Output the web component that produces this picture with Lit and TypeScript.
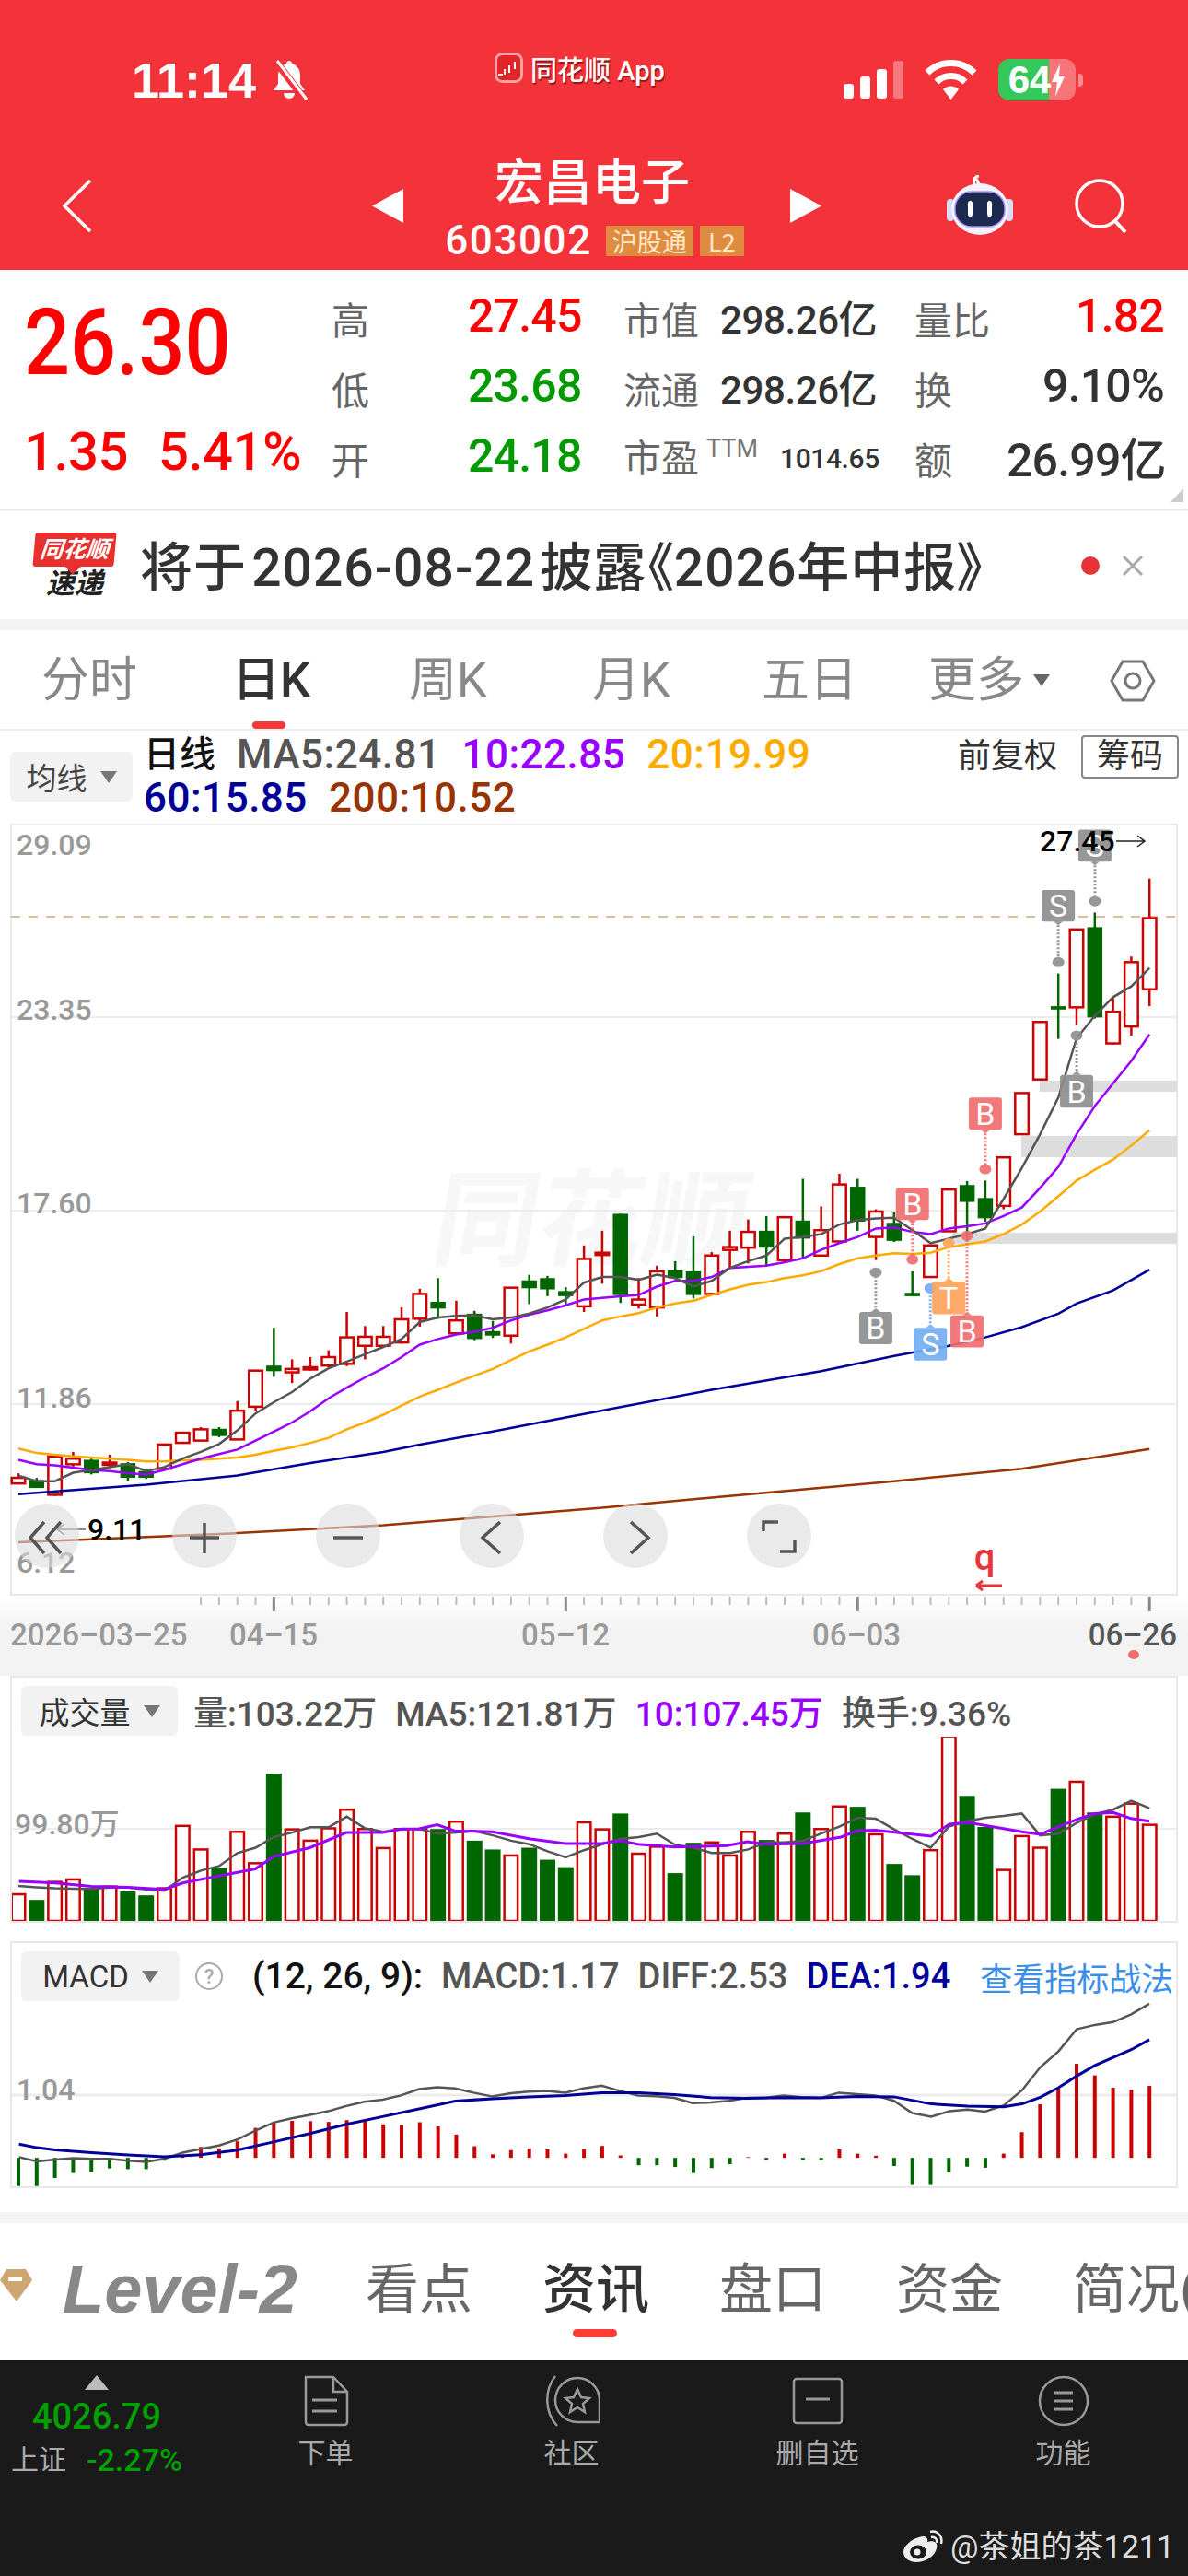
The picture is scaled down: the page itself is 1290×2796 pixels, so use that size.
import { LitElement, html, svg, css } from 'lit';
import { customElement } from 'lit/decorators.js';

// measured from the chart, converted to page pixels by the helpers below
const chartY = (v: number) => 880 + v / 1.633;
const subX = (v: number) => v / 1.2155;
const subY = (v: number) => 1820 + v / 2.613;
const candleX = (i: number) => 20 + 19.81 * i;
const markX = (v: number) => 640 + v / 2.412;

const RED = '#cc0000';
const GREEN = '#006600';

// bodyTop, bodyBottom, wickTop, wickBottom, colour
type Candle = [number, number, number, number, 'r' | 'g'];
const candles: Candle[] = [
  [1184, 1194, 1176, 1194, 'r'], [1188, 1202, 1184, 1202, 'g'], [1146, 1214, 1146, 1216, 'r'], [1150, 1160, 1138, 1164, 'r'],
  [1152, 1176, 1150, 1178, 'g'], [1157, 1161, 1143, 1166, 'r'], [1158, 1184, 1156, 1190, 'g'], [1172, 1184, 1168, 1186, 'g'],
  [1125, 1168, 1125, 1170, 'r'], [1104, 1122, 1104, 1122, 'r'], [1098, 1118, 1094, 1118, 'r'], [1097, 1110, 1094, 1112, 'g'],
  [1065, 1116, 1048, 1116, 'r'], [994, 1058, 994, 1066, 'r'], [985, 995, 918, 1005, 'g'], [991, 997, 974, 1016, 'r'],
  [988, 992, 970, 994, 'r'], [970, 985, 958, 988, 'r'], [935, 982, 890, 986, 'r'], [934, 950, 915, 974, 'r'],
  [934, 950, 915, 952, 'r'], [903, 944, 882, 946, 'r'], [858, 902, 849, 916, 'r'], [872, 884, 830, 902, 'g'],
  [905, 928, 870, 930, 'r'], [893, 938, 888, 940, 'g'], [924, 932, 906, 936, 'g'], [847, 932, 847, 946, 'r'],
  [834, 848, 824, 876, 'g'], [830, 850, 826, 862, 'g'], [853, 862, 846, 880, 'g'], [796, 880, 772, 890, 'r'],
  [785, 789, 746, 840, 'r'], [716, 860, 716, 874, 'g'], [868, 877, 830, 884, 'r'], [818, 882, 808, 898, 'r'],
  [816, 830, 800, 832, 'g'], [818, 860, 756, 866, 'g'], [790, 858, 784, 860, 'r'], [775, 780, 746, 810, 'r'],
  [748, 776, 726, 804, 'r'], [746, 776, 720, 808, 'g'], [722, 798, 722, 800, 'r'], [728, 760, 654, 795, 'g'],
  [745, 790, 703, 792, 'r'], [664, 765, 645, 768, 'r'], [668, 730, 654, 746, 'g'], [712, 757, 708, 798, 'r'],
  [732, 764, 712, 766, 'g'], [856, 862, 818, 862, 'g'], [772, 828, 772, 828, 'r'], [673, 747, 673, 748, 'r'],
  [665, 695, 658, 765, 'g'], [688, 724, 657, 730, 'g'], [616, 702, 616, 708, 'r'], [502, 575, 502, 575, 'r'],
  [376, 478, 376, 478, 'r'], [348, 354, 290, 406, 'g'], [212, 350, 212, 382, 'r'], [208, 368, 182, 370, 'g'],
  [358, 414, 332, 416, 'r'], [270, 384, 260, 400, 'r'], [192, 318, 122, 348, 'r'],
];

const ma5 = [1180, 1190, 1190, 1175, 1170, 1165, 1160, 1172, 1165, 1150, 1138, 1124, 1100, 1070, 1050, 1032, 1008, 990, 978, 965, 952, 938, 908, 900, 897, 896, 903, 900, 893, 882, 868, 838, 828, 828, 833, 824, 830, 845, 835, 812, 800, 790, 760, 757, 752, 735, 727, 724, 723, 745, 768, 760, 752, 742, 690, 635, 575, 510, 405, 365, 332, 313, 280];
const ma10 = [1152, 1160, 1162, 1166, 1170, 1172, 1176, 1178, 1170, 1160, 1150, 1142, 1134, 1118, 1102, 1086, 1066, 1043, 1024, 1006, 990, 970, 948, 938, 930, 925, 918, 905, 895, 887, 878, 868, 865, 862, 860, 845, 835, 835, 828, 812, 810, 808, 802, 795, 780, 768, 757, 742, 740, 748, 752, 742, 738, 733, 720, 705, 670, 633, 575, 525, 485, 445, 398];
const ma20 = [1132, 1140, 1143, 1146, 1148, 1150, 1152, 1155, 1155, 1153, 1152, 1150, 1148, 1143, 1136, 1130, 1122, 1113, 1098, 1086, 1072, 1056, 1040, 1028, 1015, 1003, 991, 975, 960, 948, 935, 920, 905, 898, 892, 882, 875, 870, 860, 850, 842, 837, 830, 825, 818, 805, 795, 790, 786, 787, 785, 775, 770, 765, 752, 735, 712, 685, 657, 638, 620, 595, 568];
const ma60: [number, number][] = [[0, 1213], [7, 1196], [12, 1180], [16, 1158], [20, 1138], [22, 1125], [26, 1102], [30, 1077], [38, 1028], [44, 995], [48, 968], [51, 950], [53, 935], [55, 917], [57, 893], [58, 875], [60, 852], [62, 815]];
const ma200: [number, number][] = [[0, 1298], [4, 1293], [12, 1282], [20, 1268], [32, 1237], [38, 1219], [48, 1190], [55, 1168], [62, 1133]];

// X in the chart crop, label, colour, box top, box bottom, dot
const markers: [number, string, string, number, number, number][] = [
  [750, 'B', '#8f8f8f', 890, 947, 820],
  [846, 'B', '#f06e6e', 670, 727, 797],
  [893, 'S', '#74aef2', 918, 976, 848],
  [941, 'T', '#ffa35c', 836, 894, 768],
  [989, 'B', '#f06e6e', 896, 953, 755],
  [1037, 'B', '#f06e6e', 510, 567, 637],
  [1228, 'S', '#8f8f8f', 142, 198, 270],
  [1324, 'S', '#8f8f8f', 35, 92, 162],
  [1276, 'B', '#8f8f8f', 470, 528, 400],
];

const volBars: [number, 'r' | 'g'][] = [
  [622, 'r'], [638, 'g'], [587, 'r'], [580, 'r'], [605, 'g'], [600, 'r'], [614, 'g'], [625, 'g'], [605, 'r'], [428, 'r'],
  [495, 'r'], [548, 'g'], [445, 'r'], [534, 'r'], [280, 'g'], [438, 'r'], [470, 'r'], [435, 'r'], [382, 'r'], [437, 'r'],
  [491, 'r'], [437, 'r'], [437, 'r'], [437, 'g'], [416, 'r'], [470, 'g'], [495, 'g'], [512, 'r'], [490, 'g'], [524, 'g'],
  [545, 'g'], [418, 'r'], [438, 'r'], [393, 'g'], [507, 'r'], [487, 'r'], [562, 'g'], [476, 'g'], [475, 'r'], [512, 'r'],
  [445, 'r'], [468, 'g'], [450, 'r'], [390, 'g'], [437, 'r'], [373, 'r'], [374, 'g'], [452, 'r'], [536, 'g'], [568, 'g'],
  [497, 'r'], [174, 'r'], [343, 'g'], [431, 'g'], [553, 'r'], [457, 'r'], [490, 'r'], [323, 'g'], [303, 'r'], [390, 'g'],
  [402, 'r'], [365, 'r'], [425, 'r'],
];
const volMa5 = [598, 602, 605, 606, 607, 603, 603, 608, 612, 575, 555, 542, 505, 490, 460, 447, 432, 432, 402, 435, 445, 437, 437, 450, 447, 443, 455, 470, 480, 500, 517, 497, 480, 465, 460, 450, 482, 490, 505, 505, 495, 475, 475, 470, 450, 430, 405, 408, 438, 465, 490, 430, 415, 405, 400, 393, 455, 450, 420, 395, 382, 357, 378];
const volMa10: [number, number][] = [[25, 585], [73, 590], [121, 600], [169, 602], [217, 608], [241, 590], [289, 570], [337, 550], [361, 515], [409, 490], [457, 447], [505, 447], [530, 437], [553, 436], [577, 425], [600, 442], [650, 445], [700, 465], [746, 478], [794, 478], [818, 470], [842, 480], [890, 488], [960, 484], [986, 473], [1010, 480], [1060, 478], [1110, 460], [1131, 442], [1155, 440], [1229, 457], [1253, 423], [1277, 418], [1349, 445], [1373, 452], [1421, 410], [1445, 393], [1469, 390], [1493, 407], [1517, 415]];

const macdBars: [number, 'r' | 'g'][] = [
  [1447, 'g'], [1447, 'g'], [1424, 'g'], [1410, 'g'], [1407, 'g'], [1397, 'g'], [1399, 'g'], [1399, 'g'], [1375, 'g'], [1358, 'r'],
  [1336, 'r'], [1340, 'r'], [1320, 'r'], [1282, 'r'], [1268, 'r'], [1262, 'r'], [1263, 'r'], [1265, 'r'], [1260, 'r'], [1258, 'r'],
  [1272, 'r'], [1274, 'r'], [1266, 'r'], [1278, 'r'], [1301, 'r'], [1334, 'r'], [1357, 'r'], [1345, 'r'], [1341, 'r'], [1343, 'r'],
  [1355, 'r'], [1342, 'r'], [1333, 'r'], [1360, 'r'], [1388, 'g'], [1388, 'g'], [1393, 'g'], [1410, 'g'], [1396, 'g'], [1385, 'g'],
  [1365, 'r'], [1372, 'g'], [1355, 'r'], [1372, 'g'], [1373, 'g'], [1343, 'r'], [1355, 'r'], [1361, 'r'], [1390, 'g'], [1444, 'g'],
  [1444, 'g'], [1408, 'g'], [1392, 'g'], [1395, 'g'], [1355, 'r'], [1294, 'r'], [1215, 'r'], [1170, 'r'], [1100, 'r'], [1133, 'r'],
  [1168, 'r'], [1174, 'r'], [1163, 'r'],
];
const diff: [number, number][] = [[25, 1365], [49, 1377], [73, 1372], [97, 1368], [121, 1370], [145, 1370], [169, 1375], [193, 1378], [217, 1370], [241, 1352], [265, 1342], [289, 1332], [313, 1315], [337, 1290], [361, 1267], [385, 1255], [409, 1245], [433, 1235], [457, 1220], [481, 1208], [505, 1202], [529, 1190], [553, 1172], [577, 1167], [601, 1170], [625, 1182], [650, 1193], [674, 1184], [698, 1179], [722, 1177], [746, 1182], [770, 1170], [794, 1162], [818, 1177], [842, 1190], [866, 1192], [890, 1197], [914, 1212], [938, 1210], [962, 1205], [986, 1197], [1010, 1197], [1034, 1190], [1058, 1195], [1083, 1197], [1107, 1182], [1131, 1186], [1155, 1190], [1180, 1205], [1204, 1240], [1229, 1250], [1253, 1235], [1277, 1230], [1300, 1236], [1325, 1218], [1349, 1175], [1373, 1110], [1397, 1065], [1421, 1002], [1445, 990], [1469, 982], [1493, 960], [1517, 930]];
const dea: [number, number][] = [[25, 1328], [49, 1338], [73, 1344], [121, 1352], [169, 1359], [217, 1364], [265, 1358], [313, 1345], [361, 1322], [409, 1298], [457, 1272], [505, 1250], [553, 1228], [601, 1206], [650, 1199], [698, 1194], [746, 1190], [794, 1182], [842, 1182], [890, 1188], [938, 1196], [986, 1198], [1034, 1196], [1083, 1197], [1131, 1193], [1180, 1194], [1229, 1214], [1277, 1220], [1325, 1222], [1349, 1214], [1373, 1195], [1397, 1168], [1421, 1135], [1445, 1105], [1493, 1060], [1517, 1032]];

const series = (vals: number[]) => vals.map((v, i) => `${candleX(i).toFixed(1)},${chartY(v).toFixed(1)}`).join(' ');
const pairs = (vals: [number, number][]) => vals.map(([i, v]) => `${candleX(i).toFixed(1)},${chartY(v).toFixed(1)}`).join(' ');
const subPoints = (vals: [number, number][]) => vals.map(([x, y]) => `${subX(x).toFixed(1)},${subY(y).toFixed(1)}`).join(' ');

@customElement('app-root')
export class AppRoot extends LitElement {
  static styles = css`
    :host {
      display: block;
      width: 1290px;
      height: 2796px;
      overflow: hidden;
      background: #fff;
      font-family: Roboto, "Noto Sans CJK SC", sans-serif;
      color: #333;
    }
    svg { display: block; flex: none; }
    svg text { font-family: Roboto, "Noto Sans CJK SC", sans-serif; }

    .head { height: 293px; background: #f3323a; color: #fff; }
    .status { height: 163px; display: flex; align-items: center; padding-top: 10px; box-sizing: border-box; }
    .clock { display: flex; align-items: center; gap: 14px; margin-left: 143px; width: 394px; }
    .time { font-family: "Liberation Sans", sans-serif; font-size: 54px; font-weight: 700; line-height: 60px; }
    .island { display: flex; align-items: center; gap: 8px; width: 379px; margin-top: -26px; font-size: 29px; font-weight: 500; text-shadow: 1px 2px 1px rgba(80, 0, 0, 0.6); }
    .sysicons { display: flex; align-items: center; }
    .battery { margin-left: 23px; width: 84px; height: 45px; border-radius: 12px; background: linear-gradient(90deg, #34c759 65%, rgba(255, 255, 255, 0.32) 65%); display: flex; align-items: center; justify-content: center; gap: 0; font-size: 42px; font-weight: 700; font-family: "Liberation Sans", sans-serif; }
    .nub { margin-left: 3px; width: 5px; height: 14px; border-radius: 0 4px 4px 0; background: rgba(255, 255, 255, 0.45); }
    .titlebar { height: 120px; display: flex; align-items: center; padding-left: 68px; }
    .stock { width: 420px; display: flex; flex-direction: column; align-items: center; }
    .name { font-size: 53px; line-height: 56px; font-weight: 500; margin-left: -10px; font-family: "Noto Sans CJK SC", sans-serif; }
    .code-row { display: flex; align-items: center; gap: 0; height: 38px; margin-top: 20px; margin-left: -5px; }
    .code { font-size: 44px; letter-spacing: 1.600px; line-height: 38px; font-weight: 500; }
    .tag { height: 33px; line-height: 33px; width: 48px; text-align: center; background: #e08c40; color: #ffe9c9; font-size: 27px; margin-left: 7px; font-family: "Noto Sans CJK SC", sans-serif; }
    .tag.first { margin-left: 15px; width: 95px; }
    .robot { margin-left: 136px; }
    .search { margin-left: 67px; }

    .quote { position: relative; height: 259px; display: flex; border-bottom: 3px solid #eee; box-sizing: content-box; }
    .price-col { width: 360px; padding-left: 26px; box-sizing: border-box; color: #f00; }
    .big { font-size: 100px; line-height: 158px; font-weight: 500; transform: scaleX(0.88); transform-origin: left center; }
    .change { font-size: 58px; line-height: 78px; display: flex; gap: 33px; white-space: nowrap; letter-spacing: -0.500px; font-weight: 500; }
    .table { display: grid; grid-template-columns: 148px 169px 105px 211px 100px 171px; grid-auto-rows: 76px; padding-top: 12px; align-items: center; }
    .lb { font-size: 41px; color: #666; white-space: nowrap; line-height: 76px; padding-top: 6px; box-sizing: border-box; height: 76px; }
    .val { font-size: 50px; font-weight: 500; letter-spacing: -0.800px; }
    .up { color: #f00; }
    .down { color: #009900; }
    .amt { font-size: 42px; font-weight: 500; letter-spacing: -0.400px; color: #333; white-space: nowrap; }
    .amt.sm { font-size: 30px; padding-left: 65px; padding-top: 4px; }
    .right { text-align: right; white-space: nowrap; color: #333; }
    .right.up { color: #f00; }
    .ttm { display: flex; align-items: center; width: 160px; }
    .ttm small { font-size: 27px; color: #777; margin: -22px 0 0 8px; }
    .corner { position: absolute; right: 5px; bottom: 7px; }

    .notice { height: 117px; display: flex; align-items: center; padding-left: 37px; }
    .logo { width: 88px; text-align: center; }
    .logo-top { position: relative; height: 37px; line-height: 37px; background: #e8302f; color: #fff; font-size: 25px; font-weight: 700; font-style: italic; border-radius: 3px; transform: skewX(-5deg); white-space: nowrap; }
    .logo-top::after { content: ""; position: absolute; left: 38px; bottom: -6px; width: 12px; height: 12px; background: #e8302f; transform: rotate(45deg); }
    .logo-bot { margin-top: 3px; font-size: 31px; line-height: 32px; font-weight: 700; font-style: italic; color: #222; }
    .notice-text { margin: -6px 0 0 27px; width: 1000px; font-size: 57px; font-weight: 500; letter-spacing: 1px; word-spacing: -10px; color: #333; white-space: nowrap; }
    .notice-text span { font-feature-settings: "palt"; }
    .dot { margin-left: 22px; width: 20px; height: 20px; border-radius: 50%; background: #e83438; }
    .close { margin-left: 24px; }
    .band { height: 12px; background: #f4f4f4; }

    .tabs { height: 109px; box-sizing: border-box; display: grid; grid-template-columns: 207px 192px 199px 184px 181px 197px 50px; padding-left: 45px; align-items: center; border-bottom: 2px solid #eee; font-size: 52px; color: #888; position: relative; }
    .tab { position: relative; height: 109px; line-height: 107px; white-space: nowrap; display: flex; align-items: center; gap: 10px; }
    .tab.on { color: #333; font-weight: 500; }
    .tab.on::after { content: ""; position: absolute; left: 22px; bottom: 2px; width: 36px; height: 8px; border-radius: 4px; background: #f33b3b; }
    .tri { width: 0; height: 0; border-left: 9px solid transparent; border-right: 9px solid transparent; border-top: 13px solid #666; }

    .chart-head { height: 101px; display: flex; padding-left: 11px; box-sizing: border-box; }
    .select { background: #f2f2f2; border-radius: 6px; display: flex; align-items: center; justify-content: center; gap: 14px; font-size: 33px; color: #444; }
    .ma-select { width: 133px; height: 54px; margin-top: 23px; flex: none; }
    .ma-lines { margin-left: 12px; padding-top: 3px; width: 762px; font-size: 44px; font-weight: 500; letter-spacing: 0.500px; line-height: 47px; color: #555; white-space: nowrap; }
    .ma-line { display: flex; gap: 23px; height: 47px; }
    .ma-line b { font-weight: 500; font-size: 39px; color: #111; letter-spacing: 0; }
    .m10 { color: #9900ff; }
    .m20 { color: #ffaa00; }
    .m60 { color: #000099; }
    .m200 { color: #993300; }
    .ma-right { display: flex; align-items: flex-start; margin-left: 122px; font-size: 36px; white-space: nowrap; color: #333; }
    .adj { line-height: 56px; }
    .cyq { margin-left: 26px; margin-top: 5px; width: 106px; height: 47px; line-height: 43px; box-sizing: border-box; border: 2px solid #888; border-radius: 4px; text-align: center; }

    .panel { margin: 0 11px; width: 1268px; box-sizing: border-box; height: 268px; border: 2px solid #e8e8e8; overflow: hidden; }
    .panel + .panel { margin-top: 20px; }
    .panel-head { height: 64px; display: flex; align-items: center; padding: 8px 0 0 10px; box-sizing: border-box; font-size: 37px; font-weight: 500; white-space: nowrap; color: #555; gap: 20px; }
    .panel-head .select { width: 170px; height: 54px; flex: none; color: #333; font-size: 33px; font-weight: 400; margin-right: -3px; }
    .panel-head .black { color: #111; font-size: 39px; }
    .macd-info { display: flex; gap: 20px; font-size: 38px; align-items: center; margin-left: 12px; }
    .link { color: #3b8fe8; font-size: 35px; font-weight: 400; margin-left: 12px; }
    .panels-gap { height: 26px; }

    .sub-tabs { height: 149px; display: flex; align-items: center; overflow: hidden; position: relative; font-size: 58px; color: #666; white-space: nowrap; }
    .level { flex: none; margin: -6px 0 0 68px; width: 329px; font-family: "Liberation Sans", sans-serif; font-size: 74px; font-weight: 700; font-style: italic; color: #888; }
    .sub-tab { position: relative; width: 192px; height: 149px; flex: none; line-height: 145px; }
    .sub-tab.on { color: #333; font-weight: 500; }
    .sub-tab.on::after { content: ""; position: absolute; left: 33px; bottom: 25px; width: 48px; height: 9px; border-radius: 5px; background: #ff3b36; }

    .footer { height: 234px; background: #1a1a1a; display: flex; flex-direction: column; color: #aaa; }
    .foot-row { display: grid; grid-template-columns: 220px repeat(4, 267px); padding-top: 16px; }
    .index { display: flex; flex-direction: column; align-items: center; color: #00a000; padding-right: 10px; }
    .index-val { font-size: 38px; font-weight: 500; line-height: 46px; margin-top: 6px; }
    .index-sub { display: flex; align-items: center; gap: 22px; font-size: 34px; font-weight: 500; line-height: 40px; margin-top: 4px; white-space: nowrap; }
    .index-sub i { font-style: normal; font-weight: 400; font-size: 30px; color: #aaa; }
    .foot-item { display: flex; flex-direction: column; align-items: center; gap: 8px; font-size: 30px; line-height: 42px; }
    .wm { margin-top: auto; padding: 0 15px 12px 0; display: flex; justify-content: flex-end; align-items: center; gap: 6px; color: #ddd; font-size: 34px; line-height: 40px; }
  `;

  renderHead() {
    return html`
      <div class="head">
        <div class="status">
          <div class="clock">
            <span class="time">11:14</span>
            <svg width="44" height="46" viewBox="0 0 42 46">
              <path d="M21 2c-2 0-3 2-3 3-6 2-9 7-9 13v9l-5 7h34l-5-7v-9c0-6-3-11-9-13 0-1-1-3-3-3z" fill="#fff" />
              <path d="M15 37a6 6 0 0 0 12 0z" fill="#fff" />
              <path d="M6 2l32 42" stroke="#f3323a" stroke-width="8" />
              <path d="M8 2l32 42" stroke="#fff" stroke-width="3" />
            </svg>
          </div>
          <div class="island">
            <svg width="31" height="33" viewBox="0 0 31 33">
              <rect x="1.5" y="1.5" width="28" height="30" rx="7" fill="#e0242a" stroke="#f9a0a0" stroke-width="3" />
              <path d="M4 24h5M11 18v6M16 14v8M22 10v8" stroke="#fff" stroke-width="2" />
            </svg>
            <span>同花顺 App</span>
          </div>
          <div class="sysicons">
            <svg width="65" height="41" viewBox="0 0 65 41">
              <rect x="0" y="25" width="11" height="16" rx="3" fill="#fff" />
              <rect x="18" y="17" width="11" height="24" rx="3" fill="#fff" />
              <rect x="36" y="9" width="11" height="32" rx="3" fill="#fff" />
              <rect x="54" y="0" width="11" height="41" rx="3" fill="#fff" opacity="0.35" />
            </svg>
            <svg width="57" height="43" viewBox="0 0 57 43" style="margin-left:23px">
              <path d="M3 14a36 36 0 0 1 51 0" fill="none" stroke="#fff" stroke-width="7" />
              <path d="M13 24a22 22 0 0 1 31 0" fill="none" stroke="#fff" stroke-width="7" />
              <path d="M20 32a12 12 0 0 1 17 0L28.500 43z" fill="#fff" />
            </svg>
            <div class="battery">
              <span>64</span>
              <svg width="16" height="36" viewBox="0 0 16 36"><path d="M10 0L1 20h6l-2 16 10-22H9z" fill="#fff" /></svg>
            </div>
            <div class="nub"></div>
          </div>
        </div>
        <div class="titlebar">
          <svg width="31" height="57" viewBox="0 0 31 57"><path d="M30 1L2 28.500 30 56" fill="none" stroke="#fff" stroke-width="3.500" /></svg>
          <svg width="34" height="37" viewBox="0 0 34 37" style="margin-left:305px"><path d="M34 0V37L0 18.500z" fill="#fff" /></svg>
          <div class="stock">
            <div class="name">宏昌电子</div>
            <div class="code-row">
              <span class="code">603002</span>
              <span class="tag first">沪股通</span>
              <span class="tag">L2</span>
            </div>
          </div>
          <svg width="34" height="37" viewBox="0 0 34 37"><path d="M0 0V37L34 18.500z" fill="#fff" /></svg>
          <svg class="robot" width="72" height="66" viewBox="0 0 72 66">
            <path d="M30 10c-2-6 2-9 5-9M32 4l4 8" fill="none" stroke="#fff" stroke-width="3" />
            <rect x="0" y="26" width="8" height="24" rx="4" fill="#d8dcf5" />
            <rect x="64" y="26" width="8" height="24" rx="4" fill="#d8dcf5" />
            <ellipse cx="36" cy="37" rx="31" ry="28" fill="#f2f3fd" />
            <rect x="9" y="18" width="54" height="38" rx="18" fill="#1c2a4d" stroke="#a88cf5" stroke-width="1.500" />
            <rect x="23" y="28" width="5" height="17" rx="2.500" fill="#fff" />
            <rect x="44" y="28" width="5" height="17" rx="2.500" fill="#fff" />
          </svg>
          <svg class="search" width="58" height="60" viewBox="0 0 58 60">
            <circle cx="27" cy="28" r="25" fill="none" stroke="#fff" stroke-width="3.500" />
            <path d="M44 47l11 12" stroke="#fff" stroke-width="4" />
          </svg>
        </div>
      </div>
    `;
  }

  renderQuote() {
    return html`
      <div class="quote">
        <div class="price-col">
          <div class="big">26.30</div>
          <div class="change"><span>1.35</span><span>5.41%</span></div>
        </div>
        <div class="table">
          <div class="lb">高</div><div class="val up">27.45</div>
          <div class="lb">市值</div><div class="amt">298.26亿</div>
          <div class="lb">量比</div><div class="val right up">1.82</div>
          <div class="lb">低</div><div class="val down">23.68</div>
          <div class="lb">流通</div><div class="amt">298.26亿</div>
          <div class="lb">换</div><div class="val right">9.10%</div>
          <div class="lb">开</div><div class="val down">24.18</div>
          <div class="lb ttm">市盈<small>TTM</small></div><div class="amt sm">1014.65</div>
          <div class="lb">额</div><div class="val right">26.99亿</div>
        </div>
        <svg class="corner" width="14" height="15" viewBox="0 0 14 15"><path d="M14 0V15H0z" fill="#ccc" /></svg>
      </div>
    `;
  }

  renderNotice() {
    return html`
      <div class="notice">
        <div class="logo">
          <div class="logo-top">同花顺</div>
          <div class="logo-bot">速递</div>
        </div>
        <div class="notice-text">将于 2026-08-22 披露<span>《</span>2026年中报<span>》</span></div>
        <div class="dot"></div>
        <svg class="close" width="24" height="24" viewBox="0 0 24 24"><path d="M2 2l20 20M22 2L2 22" stroke="#aaa" stroke-width="3" /></svg>
      </div>
    `;
  }

  renderTabs() {
    return html`
      <div class="tabs">
        <div class="tab">分时</div>
        <div class="tab on">日K</div>
        <div class="tab">周K</div>
        <div class="tab">月K</div>
        <div class="tab">五日</div>
        <div class="tab">更多<span class="tri"></span></div>
        <div class="tab">
          <svg width="50" height="46" viewBox="0 0 50 46">
            <path d="M14 2H36L48 23 36 44H14L2 23z" fill="none" stroke="#777" stroke-width="3" />
            <circle cx="25" cy="23" r="8" fill="none" stroke="#777" stroke-width="3" />
          </svg>
        </div>
      </div>
    `;
  }

  renderChartHead() {
    return html`
      <div class="chart-head">
        <div class="select ma-select">均线<span class="tri" style="border-top-color:#777"></span></div>
        <div class="ma-lines">
          <div class="ma-line"><b>日线</b><span>MA5:24.81</span><span class="m10">10:22.85</span><span class="m20">20:19.99</span></div>
          <div class="ma-line"><span class="m60">60:15.85</span><span class="m200">200:10.52</span></div>
        </div>
        <div class="ma-right">
          <span class="adj">前复权</span>
          <span class="cyq">筹码</span>
        </div>
      </div>
    `;
  }

  renderCandles() {
    return candles.map(([top, bottom, wickTop, wickBottom, c], i) => {
      const x = candleX(i);
      const colour = c === 'r' ? RED : GREEN;
      const wick = svg`<line x1=${x} x2=${x} y1=${chartY(wickTop)} y2=${chartY(wickBottom)} stroke=${colour} stroke-width="2.500" />`;
      if (c === 'r') {
        return svg`${wick}<rect x=${x - 7.25} y=${chartY(top)} width="14.500" height=${(bottom - top) / 1.633} fill="#fff" stroke=${colour} stroke-width="2.500" />`;
      }
      return svg`${wick}<rect x=${x - 8.25} y=${chartY(top)} width="16.500" height=${(bottom - top) / 1.633} fill=${colour} />`;
    });
  }

  renderMarkers() {
    return markers.map(([zx, label, colour, top, bottom, dot]) => {
      const x = markX(zx);
      const y0 = chartY(top);
      const y1 = chartY(bottom);
      const dy = chartY(dot);
      const from = dot < top ? dy : y1;
      const to = dot < top ? y0 : dy;
      return svg`
        <g opacity="0.92">
          <line x1=${x} x2=${x} y1=${from} y2=${to} stroke=${colour} stroke-width="3" stroke-dasharray="2 2" />
          <ellipse cx=${x} cy=${dy} rx="6.500" ry="5.500" fill=${colour} />
          <rect x=${x - 18} y=${y0} width="36" height=${y1 - y0} rx="3" fill=${colour} />
          <path d=${dot < top ? `M${x - 5} ${y0}l5 -4 5 4z` : `M${x - 5} ${y1}l5 4 5 -4z`} fill=${colour} />
          <text x=${x} y=${(y0 + y1) / 2 + 12} text-anchor="middle" font-size="34" fill="#fff">${label}</text>
        </g>
      `;
    });
  }

  renderChart() {
    const ticks = [];
    for (let i = 10; i < 63; i++) {
      const major = i === 14 || i === 30 || i === 46 || i === 62;
      ticks.push(svg`<line x1=${candleX(i)} x2=${candleX(i)} y1="1734" y2=${major ? 1750 : 1743} stroke=${major ? '#888' : '#bbb'} stroke-width=${major ? 3 : 2} />`);
    }
    const btn = (cx: number, d: string) => svg`
      <circle cx=${cx} cy="1668" r="35" fill="#dcdcdc" opacity="0.6" />
      <path d=${d} fill="none" stroke="#555" stroke-width="3.500" />`;
    return html`
      <svg width="1290" height="925" viewBox="0 895 1290 925">
        <defs>
          <linearGradient id="axisfade" x1="0" x2="0" y1="0" y2="1">
            <stop offset="0" stop-color="#fff" />
            <stop offset="0.45" stop-color="#f2f2f2" />
            <stop offset="1" stop-color="#f3f3f3" />
          </linearGradient>
        </defs>
        <rect x="0" y="1733" width="1290" height="87" fill="url(#axisfade)" />
        <rect x="12" y="896" width="1266" height="836" fill="#fff" stroke="#e8e8e8" stroke-width="2" />

        <text x="466" y="1366" font-size="114" font-weight="700" fill="#f7f7f7" transform="skewX(-10) translate(240 0)">同花顺</text>

        <path d="M12 1105H1278M12 1315H1278M12 1525H1278" stroke="#ececec" stroke-width="2" />
        <path d="M12 996H1278" stroke="#dcbf9c" stroke-width="2" stroke-dasharray="10 9" />

        <g fill="#ddd">
          <rect x="1129" y="1174" width="149" height="12" />
          <rect x="1109" y="1234" width="169" height="23" />
          <rect x="1034" y="1339" width="244" height="12" />
        </g>

        <g font-size="32" font-weight="500" fill="#999">
          <text x="18" y="929">29.09</text>
          <text x="18" y="1108">23.35</text>
          <text x="18" y="1318">17.60</text>
          <text x="18" y="1529">11.86</text>
          <text x="18" y="1708">6.12</text>
        </g>

        ${this.renderCandles()}

        <g fill="none" stroke-width="2.500">
          <polyline points=${pairs(ma200)} stroke="#993300" />
          <polyline points=${pairs(ma60)} stroke="#000099" />
          <polyline points=${series(ma20)} stroke="#ffaa00" />
          <polyline points=${series(ma10)} stroke="#9900ff" />
          <polyline points=${series(ma5)} stroke="#555" />
        </g>

        ${this.renderMarkers()}

        <text x="1129" y="925" font-size="32" font-weight="500" fill="#000">27.45</text>
        <path d="M1212 914H1243M1235 908l8 6-8 6" fill="none" stroke="#222" stroke-width="1.500" />
        <text x="95" y="1672" font-size="32" font-weight="500" fill="#000">9.11</text>
        <path d="M93 1661H62M70 1655l-8 6 8 6" fill="none" stroke="#666" stroke-width="1.500" />

        ${btn(51, 'M48 1653L33 1670 48 1687M66 1653L51 1670 66 1687')}
        ${btn(222, 'M206 1670H238M222 1654V1687')}
        ${btn(378, 'M362 1670H394')}
        ${btn(534, 'M543 1653L524 1670 543 1687')}
        ${btn(690, 'M685 1653L704 1670 685 1687')}
        ${btn(846, 'M829 1663V1653H845M863 1673V1685H847')}

        <path d="M1062 1722H1088M1060 1722l7-5M1060 1722l7 5" fill="none" stroke="#e8343a" stroke-width="3" />
        <text x="1069" y="1705" text-anchor="middle" font-size="40" font-weight="500" fill="#e8343a">q</text>

        ${ticks}
        <g font-size="33" font-weight="500" fill="#999">
          <text x="11" y="1787">2026–03–25</text>
          <text x="297" y="1787" text-anchor="middle">04–15</text>
          <text x="614" y="1787" text-anchor="middle">05–12</text>
          <text x="930" y="1787" text-anchor="middle">06–03</text>
          <text x="1278" y="1787" text-anchor="end" fill="#555">06–26</text>
        </g>
        <ellipse cx="1231" cy="1797" rx="6" ry="5" fill="#f06e6e" />
      </svg>
    `;
  }

  renderVolume() {
    const bottom = 2087;
    return html`
      <div class="panel">
        <div class="panel-head">
          <div class="select">成交量<span class="tri" style="border-top-color:#777"></span></div>
          <span>量:103.22万</span><span>MA5:121.81万</span><span class="m10">10:107.45万</span><span>换手:9.36%</span>
        </div>
        <svg width="1264" height="202" viewBox="13 1887 1264 202">
          <path d="M13 1987H1277" stroke="#ececec" stroke-width="2" />
          <text x="16" y="1993" font-size="32" font-weight="500" fill="#999">99.80万</text>
          ${volBars.map(([top, c], i) => {
            const x = candleX(i);
            const y = subY(top);
            return c === 'r'
              ? svg`<rect x=${x - 7.25} y=${y} width="14.500" height=${bottom - y} fill="#fff" stroke=${RED} stroke-width="2.500" />`
              : svg`<rect x=${x - 8.5} y=${y} width="17" height=${bottom - y + 1} fill=${GREEN} />`;
          })}
          <g fill="none">
            <polyline points=${volMa5.map((v, i) => `${candleX(i).toFixed(1)},${subY(v).toFixed(1)}`).join(' ')} stroke="#555" stroke-width="2.500" />
            <polyline points=${subPoints(volMa10)} stroke="#9900ff" stroke-width="3" />
          </g>
        </svg>
      </div>
    `;
  }

  renderMacd() {
    const zero = subY(1367);
    return html`
      <div class="panel">
        <div class="panel-head">
          <div class="select" style="width:172px">MACD<span class="tri" style="border-top-color:#777"></span></div>
          <svg width="30" height="32" viewBox="0 0 30 32">
            <circle cx="15" cy="16" r="14" fill="none" stroke="#aaa" stroke-width="2" />
            <text x="15" y="24" text-anchor="middle" font-size="22" fill="#aaa">?</text>
          </svg>
          <div class="macd-info">
            <span class="black">(12, 26, 9):</span><span>MACD:1.17</span><span>DIFF:2.53</span><span class="m60">DEA:1.94</span><span class="link">查看指标战法</span>
          </div>
        </div>
        <svg width="1264" height="202" viewBox="13 2174 1264 202">
          <path d="M13 2275H1277" stroke="#ececec" stroke-width="3" />
          <text x="18" y="2280" font-size="32" font-weight="500" fill="#999">1.04</text>
          ${macdBars.map(([v, c], i) => svg`<line x1=${candleX(i)} x2=${candleX(i)} y1=${zero} y2=${subY(v)} stroke=${c === 'r' ? RED : GREEN} stroke-width="4" />`)}
          <g fill="none">
            <polyline points=${subPoints(diff)} stroke="#555" stroke-width="2.500" />
            <polyline points=${subPoints(dea)} stroke="#000099" stroke-width="3" />
          </g>
        </svg>
      </div>
    `;
  }

  renderSubTabs() {
    return html`
      <div class="sub-tabs">
        <svg style="position:absolute;left:0;top:50px" width="35" height="35" viewBox="0 0 35 35">
          <path d="M7 0H28L35 12 18 35 0 12z" fill="#cda671" />
          <rect x="9" y="9" width="15" height="4" fill="#fff" />
        </svg>
        <div class="level">Level-2</div>
        <div class="sub-tab">看点</div>
        <div class="sub-tab on">资讯</div>
        <div class="sub-tab">盘口</div>
        <div class="sub-tab">资金</div>
        <div class="sub-tab">简况(</div>
      </div>
    `;
  }

  renderFooter() {
    return html`
      <div class="footer">
        <div class="foot-row">
          <div class="index">
            <svg width="26" height="16" viewBox="0 0 26 16"><path d="M13 0L26 16H0z" fill="#bbb" /></svg>
            <div class="index-val">4026.79</div>
            <div class="index-sub"><i>上证</i><span>-2.27%</span></div>
          </div>
          <div class="foot-item">
            <svg width="50" height="56" viewBox="0 0 50 56" fill="none" stroke="#999" stroke-width="2.500">
              <path d="M3 2H33L48 18V51a3 3 0 0 1-3 3H6a3 3 0 0 1-3-3z" />
              <path d="M33 2V18H48" />
              <path d="M10 27H37M10 39H37" stroke-width="3" />
            </svg>
            <span>下单</span>
          </div>
          <div class="foot-item">
            <svg width="62" height="56" viewBox="0 0 62 56" fill="none" stroke="#999" stroke-width="2.500">
              <path d="M37 3a24 24 0 0 1 24 24V51H37a24 24 0 0 1 0-48z" />
              <path d="M13 1C1 16 1 40 15 55" />
              <path d="M37 15l4 9 9 1-7 6 2 9-8-5-8 5 2-9-7-6 9-1z" />
            </svg>
            <span>社区</span>
          </div>
          <div class="foot-item">
            <svg width="56" height="56" viewBox="0 0 56 56" fill="none" stroke="#999" stroke-width="2.500">
              <rect x="2" y="4" width="52" height="48" rx="3" />
              <path d="M15 26H41" stroke-width="3" />
            </svg>
            <span>删自选</span>
          </div>
          <div class="foot-item">
            <svg width="56" height="56" viewBox="0 0 56 56" fill="none" stroke="#999" stroke-width="2.500">
              <circle cx="28" cy="28" r="26" />
              <path d="M18 19H38M18 28H38M18 37H38" stroke-width="3" />
            </svg>
            <span>功能</span>
          </div>
        </div>
        <div class="wm">
          <svg width="46" height="38" viewBox="0 0 46 38">
            <path d="M18 9c8-3 10 2 9 5 6-2 12 0 10 7-2 9-13 15-22 15C8 36 1 32 1 25 1 18 10 11 18 9z" fill="#eee" />
            <ellipse cx="17" cy="25" rx="9" ry="7.500" fill="#1a1a1a" />
            <circle cx="16" cy="25" r="3.500" fill="#eee" />
            <path d="M30 3c8-2 14 5 12 13M31 9c4-1 7 2 6 6" fill="none" stroke="#eee" stroke-width="2.500" />
          </svg>
          <span>@茶姐的茶1211</span>
        </div>
      </div>
    `;
  }

  render() {
    return html`
      ${this.renderHead()}
      ${this.renderQuote()}
      ${this.renderNotice()}
      <div class="band"></div>
      ${this.renderTabs()}
      ${this.renderChartHead()}
      ${this.renderChart()}
      ${this.renderVolume()}
      ${this.renderMacd()}
      <div class="panels-gap"></div>
      <div class="band"></div>
      ${this.renderSubTabs()}
      ${this.renderFooter()}
    `;
  }
}
